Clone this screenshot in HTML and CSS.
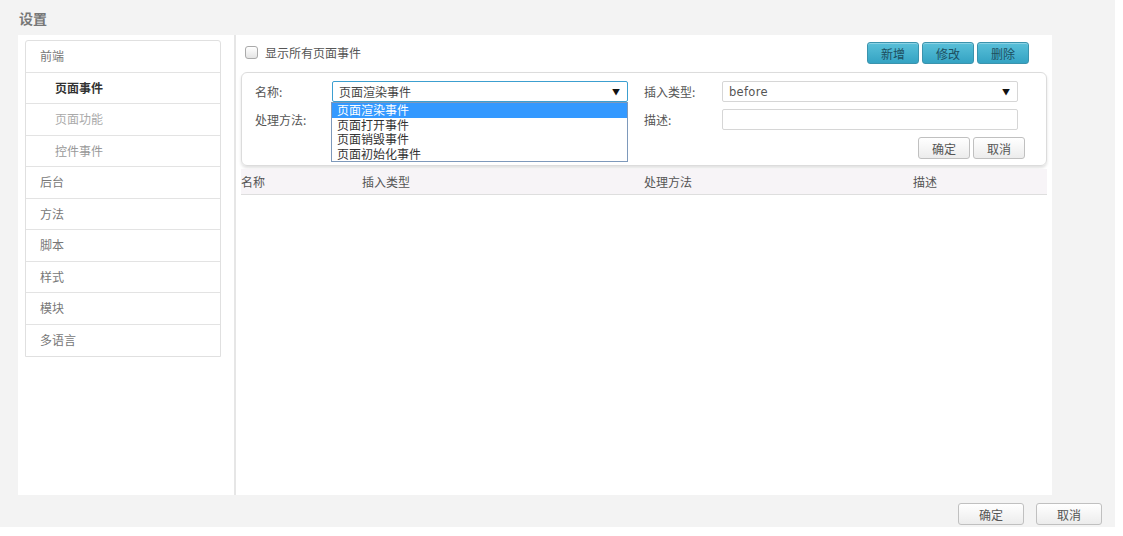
FILE: index.html
```html
<!DOCTYPE html>
<html lang="zh">
<head>
<meta charset="utf-8">
<title>设置</title>
<link rel="stylesheet" href="styles.css">
</head>
<body>
<div class="page">
  <div class="title">设置</div>
  <div class="panel">
    <div class="side">
      <ul class="menu">
        <li class="grp">前端</li>
        <li class="sub active">页面事件</li>
        <li class="sub light">页面功能</li>
        <li class="sub mid">控件事件</li>
        <li class="grp">后台</li>
        <li class="grp">方法</li>
        <li class="grp">脚本</li>
        <li class="grp">样式</li>
        <li class="grp">模块</li>
        <li class="grp">多语言</li>
      </ul>
    </div>
    <div class="divider"></div>
    <div class="content">
      <div class="toolbar">
        <label class="chk"><span class="box"></span>显示所有页面事件</label>
        <div class="tbtns">
          <button class="tbtn">新增</button>
          <button class="tbtn">修改</button>
          <button class="tbtn">删除</button>
        </div>
      </div>
      <div class="form">
        <div class="row">
          <span class="lbl">名称:</span>
          <div class="field sel focus">
            <span>页面渲染事件</span><span class="arrow">▼</span>
            <ul class="drop">
              <li class="hl">页面渲染事件</li>
              <li>页面打开事件</li>
              <li>页面销毁事件</li>
              <li>页面初始化事件</li>
            </ul>
          </div>
          <span class="lbl lbl2">插入类型:</span>
          <div class="field sel"><span class="latin">before</span><span class="arrow">▼</span></div>
        </div>
        <div class="row">
          <span class="lbl">处理方法:</span>
          <div class="field"></div>
          <span class="lbl lbl2">描述:</span>
          <div class="field"></div>
        </div>
        <div class="fbtns">
          <button class="gbtn">确定</button>
          <button class="gbtn">取消</button>
        </div>
      </div>
      <div class="thead">
        <span class="c1">名称</span>
        <span class="c2">插入类型</span>
        <span class="c3">处理方法</span>
        <span class="c4">描述</span>
      </div>
    </div>
  </div>
  <div class="footer">
    <button class="gbtn fbtn">确定</button>
    <button class="gbtn fbtn">取消</button>
  </div>
</div>
</body>
</html>
```

FILE: styles.css
```css
* { box-sizing: border-box; }
html, body { margin: 0; padding: 0; background: #fff; }
body {
  font-family: "Noto Sans CJK SC", "DejaVu Sans", sans-serif;
  font-size: 12px;
  color: #555;
}
.page {
  width: 1115px;
  height: 527px;
  background: #f3f3f3;
  display: flex;
  flex-direction: column;
}
.title {
  height: 35px;
  padding-left: 19px;
  line-height: 37px;
  font-size: 14px;
  font-weight: bold;
  color: #777;
}
.panel {
  margin-left: 18px;
  width: 1034px;
  height: 460px;
  background: #fff;
  display: flex;
}
.side {
  width: 216px;
  padding: 5px 0 0 7px;
}
.menu {
  list-style: none;
  margin: 0;
  padding: 0;
  width: 196px;
  border: 1px solid #e0e0e0;
  border-radius: 3px 3px 0 0;
}
.menu li {
  height: 31.5px;
  line-height: 30px;
  border-bottom: 1px solid #e3e3e3;
  color: #777;
}
.menu li:last-child { border-bottom: none; }
.menu .grp { padding-left: 14px; }
.menu .sub { padding-left: 29px; }
.menu .active { color: #333; font-weight: bold; }
.menu .light { color: #aaa; }
.menu .mid { color: #999; }
.divider {
  width: 2px;
  background: #e6e6e6;
}
.content {
  flex: 1;
  padding: 0 5px 0 5px;
}
.toolbar {
  height: 37px;
  display: flex;
  align-items: flex-start;
  justify-content: space-between;
}
.chk {
  display: flex;
  align-items: center;
  margin: 9px 0 0 4px;
  color: #555;
}
.box {
  width: 13px;
  height: 13px;
  border: 1px solid #aaa;
  border-radius: 3px;
  background: linear-gradient(#fff, #e4e4e4);
  margin-right: 7px;
}
.tbtns {
  display: flex;
  gap: 3px;
  margin: 7px 18px 0 0;
}
.tbtn {
  width: 52px;
  height: 22px;
  border: 1px solid #3b93ad;
  border-radius: 3px;
  background: linear-gradient(#5ac0d9, #34a3c3);
  color: #1d4f60;
  font-family: inherit;
  font-size: 12px;
  padding: 0;
  box-shadow: inset 0 1px 0 rgba(255,255,255,0.3);
}
.form {
  position: relative;
  height: 94px;
  border: 1px solid #dcdcdc;
  border-radius: 6px;
  box-shadow: 0 2px 3px rgba(0,0,0,0.12);
  padding: 8px 0 0 13px;
}
.row {
  display: flex;
  align-items: center;
  height: 21px;
  margin-bottom: 7px;
}
.lbl {
  width: 77px;
  color: #555;
}
.lbl2 { width: 78px; margin-left: 16px; }
.field {
  position: relative;
  width: 296px;
  height: 21px;
  border: 1px solid #d6d6d6;
  border-radius: 2px;
  display: flex;
  align-items: center;
  justify-content: space-between;
  padding: 0 7px 0 6px;
  color: #444;
  background: #fff;
}
.field.focus { border-color: #3c9fd0; }
.arrow { font-size: 8px; color: #111; }
.latin { font-family: "DejaVu Sans", sans-serif; font-size: 11.5px; color: #555; letter-spacing: 0.3px; }
.drop {
  position: absolute;
  left: -2px;
  top: 20px;
  width: 297px;
  margin: 0;
  padding: 0;
  list-style: none;
  background: #fff;
  border: 1px solid #7e99bb;
  z-index: 5;
}
.drop li {
  height: 14.5px;
  line-height: 14.5px;
  padding-left: 5px;
  color: #333;
}
.drop li.hl { background: #3399ff; color: #fff; }
.fbtns {
  display: flex;
  justify-content: flex-end;
  gap: 3px;
  margin: 0 21px 0 0;
}
.gbtn {
  width: 52px;
  height: 22px;
  border: 1px solid #c0c0c0;
  border-radius: 3px;
  background: linear-gradient(#ffffff, #ececec);
  color: #555;
  font-family: inherit;
  font-size: 12px;
  padding: 0;
}
.thead {
  position: relative;
  margin-top: 3px;
  height: 26px;
  background: #f7f4f7;
  border-bottom: 1px solid #dedede;
  line-height: 26px;
  color: #555;
}
.thead span { position: absolute; top: 0; }
.thead .c1 { left: 0; }
.thead .c2 { left: 121px; }
.thead .c3 { left: 403px; }
.thead .c4 { left: 672px; }
.footer {
  display: flex;
  justify-content: flex-end;
  gap: 12px;
  padding: 8px 13px 0 0;
}
.fbtn { width: 66px; height: 22px; }
```
